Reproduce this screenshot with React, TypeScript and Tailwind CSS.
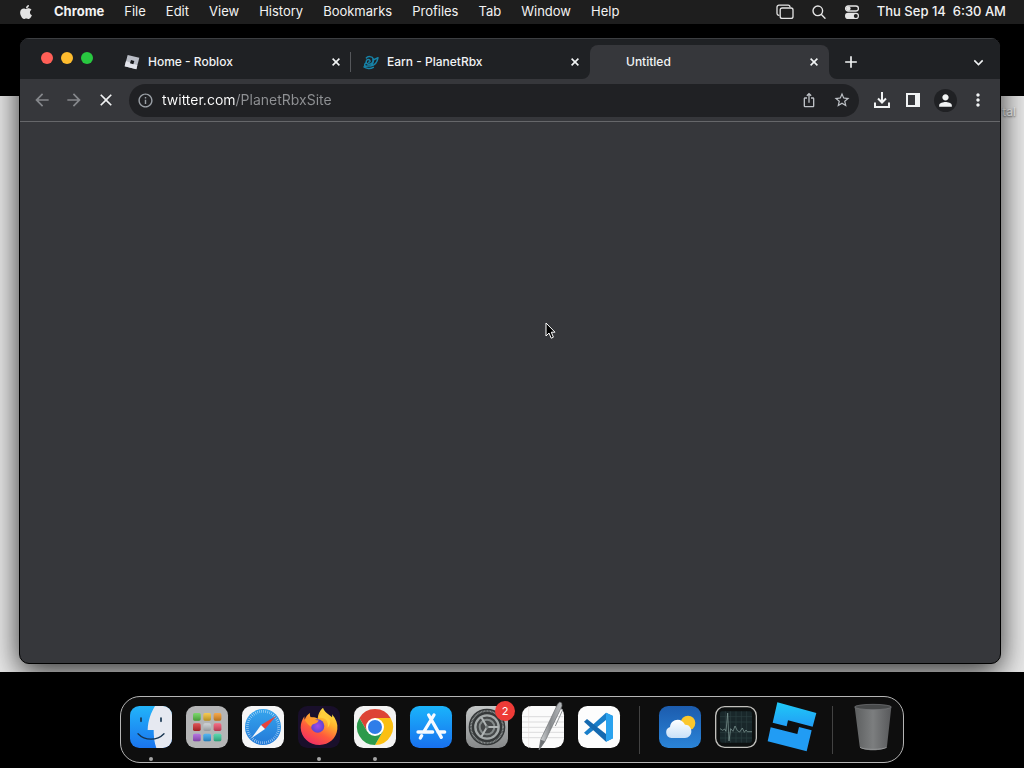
import React from 'react';
import { FaApple } from 'react-icons/fa';
import { MdArrowBack, MdArrowForward, MdClose, MdAdd, MdExpandMore, MdInfoOutline, MdIosShare, MdStarBorder, MdPerson, MdMoreVert } from 'react-icons/md';

const menus = ['File', 'Edit', 'View', 'History', 'Bookmarks', 'Profiles', 'Tab', 'Window', 'Help'];

const MenuBar = () => (
  <header className="relative z-10 flex h-6 items-center justify-between bg-[#1e1e1e] pl-[18px] pr-[18px] text-[13px] text-[#f2f2f2]">
    <nav className="flex items-center gap-5">
      <button aria-label="Apple menu"><FaApple size={16} className="text-[#e4e4e4]" /></button>
      <button className="font-bold">Chrome</button>
      {menus.map((m) => <button key={m}>{m}</button>)}
    </nav>
    <div className="flex items-center gap-[17px]">
      <button aria-label="Stage Manager">
        <svg width="18" height="16" viewBox="0 0 18 16" fill="none" stroke="#e4e4e4" strokeWidth="1.3">
          <path d="M3.400 11.300H3a2 2 0 0 1-2-2V3.200a2 2 0 0 1 2-2h9a2 2 0 0 1 2 2" />
          <rect x="4.200" y="4" width="12.800" height="10.400" rx="2" />
        </svg>
      </button>
      <button aria-label="Spotlight">
        <svg width="16" height="16" viewBox="0 0 16 16" fill="none" stroke="#e4e4e4" strokeWidth="1.4" strokeLinecap="round">
          <circle cx="6.800" cy="6.800" r="4.800" />
          <path d="M10.400 10.400l3.600 3.800" />
        </svg>
      </button>
      <button aria-label="Control Center">
        <svg width="16" height="16" viewBox="0 0 16 16">
          <rect x="1.600" y="2" width="12.800" height="5" rx="2.500" fill="none" stroke="#e4e4e4" strokeWidth="1.300" />
          <circle cx="4.300" cy="4.500" r="2.300" fill="#e4e4e4" />
          <rect x="1" y="8.800" width="14" height="6.200" rx="3.100" fill="#e4e4e4" />
          <circle cx="11.800" cy="11.900" r="2" fill="#1e1e1e" />
        </svg>
      </button>
      <time className="whitespace-pre font-medium">Thu Sep 14  6:30 AM</time>
    </div>
  </header>
);

const RobloxFavicon = () => (
  <svg width="16" height="16" viewBox="0 0 48 48">
    <path d="M11 3L46 11 37 46 2 37z" fill="#b9bdc6" />
    <path d="M2 37L6 21 40 34 37 46z" fill="#e2e4eb" />
    <path d="M21 18L31 21 28 31 18 28z" fill="#15171a" />
  </svg>
);

const PlanetFavicon = () => (
  <svg width="16" height="16" viewBox="0 0 48 48" fill="none" stroke="#1683a8" strokeWidth="4.500" strokeLinecap="round" strokeLinejoin="round">
    <path d="M10 12c4-6 18-6 21 3 2 8-6 16-13 16-6 0-10-5-8-10 2-5 9-6 11-1 1 3-1 5-4 5" />
    <path d="M31 18l14-7c-2 13-9 23-22 25-8 1-13-1-20 3 6 5 20 6 28 1M8 27c-3 3-4 6-2 9M30 17c2 7 0 12-5 16" />
  </svg>
);

const Tab = ({ title, icon, active, divider }: { title: string; icon?: React.ReactNode; active?: boolean; divider?: boolean }) => (
  <div className={`relative flex w-[239px] items-center pl-3 pr-[7px] ${active ? 'rounded-t-lg bg-[#36373b]' : ''}`}>
    <button role="tab" aria-selected={!!active} className="flex min-w-0 flex-1 items-center gap-2 text-left">
      <span className="h-4 w-4 shrink-0">{icon}</span>
      <span className="truncate">{title}</span>
    </button>
    <button aria-label={`Close ${title}`} className="flex h-4 w-4 items-center justify-center">
      <svg width="8" height="8" viewBox="0 0 8 8" stroke="currentColor" strokeWidth="1.600"><path d="M0.600 0.600l6.800 6.800M7.400 0.600L0.600 7.400" /></svg>
    </button>
    {divider && <span className="absolute right-0 top-[7px] h-5 w-px bg-[#55575b]" />}
    {active && (
      <>
        <svg className="absolute -left-2 bottom-0" width="8" height="8" viewBox="0 0 8 8"><path d="M8 0v8H0a8 8 0 0 0 8-8z" fill="#36373b" /></svg>
        <svg className="absolute -right-2 bottom-0" width="8" height="8" viewBox="0 0 8 8"><path d="M0 0v8h8a8 8 0 0 1-8-8z" fill="#36373b" /></svg>
      </>
    )}
  </div>
);

const Toolbar = () => (
  <div className="flex h-[43px] items-center border-b border-[#66676a] bg-[#36373b] px-3 text-[#f1f3f4]">
    <div className="flex w-[97px] gap-3">
      <button aria-label="Back" className="text-[#85878b]"><MdArrowBack size={20} /></button>
      <button aria-label="Forward" className="text-[#85878b]"><MdArrowForward size={20} /></button>
      <button aria-label="Stop loading"><MdClose size={20} /></button>
    </div>
    <form className="flex h-[33px] flex-1 items-center rounded-full bg-[#202124] px-2" onSubmit={(e) => e.preventDefault()}>
      <button type="button" aria-label="Site information" className="text-[#9aa0a6]"><MdInfoOutline size={17} /></button>
      <input
        aria-label="Address"
        defaultValue="twitter.com/PlanetRbxSite"
        className="ml-2 min-w-0 flex-1 bg-linear-to-r from-white from-[74px] to-[#8f9194] to-[74px] bg-clip-text text-sm text-transparent outline-none"
      />
      <div className="flex items-center gap-4 text-[#bdc1c6]">
        <button type="button" aria-label="Share"><MdIosShare size={16} /></button>
        <button type="button" aria-label="Bookmark this tab"><MdStarBorder size={18} /></button>
      </div>
    </form>
    <div className="ml-[13px] flex items-center gap-[11px]">
      <button aria-label="Downloads">
        <svg width="20" height="20" viewBox="0 0 20 20" fill="none" stroke="currentColor" strokeWidth="2">
          <path d="M10 2v10M6 8.500l4 4 4-4M3 12.500V17h14v-4.500" />
        </svg>
      </button>
      <button aria-label="Side panel">
        <svg width="20" height="20" viewBox="0 0 20 20" fill="currentColor">
          <path fillRule="evenodd" d="M3 3h14v14H3zM5 5v10h7V5z" />
        </svg>
      </button>
      <button aria-label="Profile" className="flex h-[23px] w-[23px] items-center justify-center rounded-full bg-[#202124]"><MdPerson size={19} /></button>
      <button aria-label="Chrome menu"><MdMoreVert size={20} /></button>
    </div>
  </div>
);

const BrowserWindow = () => (
  <section className="relative flex flex-1 flex-col overflow-hidden rounded-[10px] border border-black bg-[#36373b] shadow-[0_8px_30px_rgba(0,0,0,0.8)]">
    <div className="flex h-[41px] border-t border-[#3c3e41] bg-[#1f2124] pl-[21px] text-xs font-medium text-[#f1f3f4]">
      <div className="flex h-[38px] w-[71px] items-center gap-2">
        <button aria-label="Close window" className="h-3 w-3 rounded-full bg-[#ff5f57]" />
        <button aria-label="Minimize window" className="h-3 w-3 rounded-full bg-[#febc2e]" />
        <button aria-label="Zoom window" className="h-3 w-3 rounded-full bg-[#28c840]" />
      </div>
      <div role="tablist" className="flex pt-[6px]">
        <Tab title="Home - Roblox" icon={<RobloxFavicon />} divider />
        <Tab title="Earn - PlanetRbx" icon={<PlanetFavicon />} />
        <Tab title="Untitled" active />
      </div>
      <div className="flex flex-1 items-center justify-between px-3 pt-[6px]">
        <button aria-label="New tab"><MdAdd size={20} /></button>
        <button aria-label="Search tabs"><MdExpandMore size={19} /></button>
      </div>
    </div>
    <Toolbar />
    <div className="flex-1" />
  </section>
);

// Every dock icon is drawn on a 126 unit square.
const Icon = ({ children }: { children: React.ReactNode }) => (
  <svg className="h-[42px] w-[42px] overflow-visible" viewBox="0 0 126 126">{children}</svg>
);

const Finder = () => (
  <Icon>
    <defs>
      <linearGradient id="finder" x2="0" y2="1"><stop stopColor="#22b4fa" /><stop offset="1" stopColor="#1a74ee" /></linearGradient>
      <clipPath id="finderClip"><rect width="126" height="126" rx="28" /></clipPath>
    </defs>
    <g clipPath="url(#finderClip)">
      <rect width="126" height="126" fill="url(#finder)" />
      <path d="M75 0C62 22 54 44 53 72h18c0 20 2 38 8 54h47V0z" fill="#e6e9f1" />
    </g>
    <path d="M33 36v10M93 36v10" stroke="#16344f" strokeWidth="5" strokeLinecap="round" />
    <path d="M24 83c21 22 57 22 78 0" fill="none" stroke="#16344f" strokeWidth="4" strokeLinecap="round" />
  </Icon>
);

const apps = ['#5ccc48', '#f3bd2b', '#f29422', '#d3282b', '#c3c8cc', '#ef4866', '#a354d8', '#2ca3ee', '#35cf9c'];

const Launchpad = () => (
  <Icon>
    <defs>
      <linearGradient id="tileShade" x2="0" y2="1"><stop stopColor="#fff" stopOpacity="0.2" /><stop offset="1" stopOpacity="0.25" /></linearGradient>
    </defs>
    <rect width="126" height="126" rx="28" fill="#b4b5b6" />
    {apps.map((c, i) => (
      <g key={c} transform={`translate(${21 + (i % 3) * 31} ${21 + Math.floor(i / 3) * 31})`}>
        <rect width="23" height="23" rx="5" fill={c} />
        <rect width="23" height="23" rx="5" fill="url(#tileShade)" />
      </g>
    ))}
  </Icon>
);

const Safari = () => (
  <Icon>
    <defs>
      <linearGradient id="safari" x2="0" y2="1"><stop stopColor="#35a5ed" /><stop offset="1" stopColor="#2379d8" /></linearGradient>
    </defs>
    <rect width="126" height="126" rx="28" fill="#f5f5f6" />
    <circle cx="63" cy="63" r="54" fill="url(#safari)" />
    <circle cx="63" cy="63" r="47" fill="none" stroke="#d5eafb" strokeWidth="8" strokeDasharray="1.500 4.650" />
    <path d="M103 29L57 57l12 12z" fill="#e8433c" />
    <path d="M28 97l29-40 12 12z" fill="#f6f7f9" />
  </Icon>
);

const Firefox = () => (
  <Icon>
    <defs>
      <linearGradient id="fox" x1="0.800" y1="0" x2="0.250" y2="1">
        <stop stopColor="#fff04a" /><stop offset="0.350" stopColor="#ffb02d" /><stop offset="0.650" stopColor="#ff5a3c" /><stop offset="1" stopColor="#ef2a68" />
      </linearGradient>
      <radialGradient id="globe"><stop stopColor="#a04bea" /><stop offset="1" stopColor="#5e46cf" /></radialGradient>
    </defs>
    <rect width="126" height="126" rx="28" fill="#190f2b" />
    <path d="M75 5c5 15 16 17 27 29 1-3 1-6 0-9 12 14 18 29 16 45-3 27-25 47-53 47-31 0-56-23-57-52 0-13 4-23 11-34 0 4 0 7 1 10 3-8 9-16 16-20-1 5 0 9 2 13 8-1 15 0 21 4 1-13 6-25 16-33z" fill="url(#fox)" />
    <circle cx="59" cy="60" r="20" fill="url(#globe)" />
    <path d="M20 42c7-6 15-9 24-6 5 5 11 7 18 7-2 7-8 9-15 11-5 2-7 5-7 9-8-6-14-12-20-21z" fill="#ff9a2c" />
    <path d="M62 36c20-3 31 10 27 29 6-7 8-14 8-20-5-12-14-20-24-26-5 5-9 10-11 17z" fill="#ffcf3c" />
  </Icon>
);

const Chrome = () => (
  <Icon>
    <rect width="126" height="126" rx="28" fill="#f3f3f3" />
    <path d="M16.200 36A54 54 0 0 1 109.800 36H63L39.600 76.500z" fill="#dd4335" />
    <path d="M109.800 36A54 54 0 0 1 63 117L86.400 76.500 63 36z" fill="#fbbf12" />
    <path d="M63 117A54 54 0 0 1 16.200 36L39.600 76.500H86.400z" fill="#2c9a4b" />
    <circle cx="63" cy="63" r="27" fill="#fff" />
    <circle cx="63" cy="63" r="21" fill="#2f7de9" />
  </Icon>
);

const AppStore = () => (
  <Icon>
    <defs>
      <linearGradient id="store" x2="0" y2="1"><stop stopColor="#1ab4fb" /><stop offset="1" stopColor="#1870ee" /></linearGradient>
    </defs>
    <rect width="126" height="126" rx="28" fill="url(#store)" />
    <path d="M72 27L41 78M56 27l38 67M24 78h44M84 78h20M35 89l-4 7" stroke="#f6faff" strokeWidth="10" strokeLinecap="round" fill="none" />
  </Icon>
);

const Settings = () => (
  <Icon>
    <defs>
      <linearGradient id="settings" x2="0" y2="1"><stop stopColor="#c3c6c6" /><stop offset="1" stopColor="#868889" /></linearGradient>
    </defs>
    <rect width="126" height="126" rx="28" fill="url(#settings)" />
    <circle cx="63" cy="63" r="55" fill="#353839" />
    <circle cx="63" cy="63" r="48" fill="none" stroke="#8c9191" strokeWidth="5" strokeDasharray="3 1.500" />
    <circle cx="63" cy="63" r="35" fill="#454849" stroke="#a4a9a9" strokeWidth="7" />
    <circle cx="63" cy="63" r="22" fill="none" stroke="#858b8b" strokeWidth="6" />
    <path d="M63 63h34M63 63L46 34M63 63L46 92" stroke="#b0b5b5" strokeWidth="6" />
    <circle cx="63" cy="63" r="5" fill="#6f7575" />
  </Icon>
);

const TextEdit = () => (
  <Icon>
    <defs>
      <linearGradient id="pen"><stop stopColor="#dadcde" /><stop offset="0.500" stopColor="#888b8e" /><stop offset="1" stopColor="#b9bcbf" /></linearGradient>
    </defs>
    <rect width="126" height="126" rx="28" fill="#fbfbfb" />
    <path d="M2 32h122M0 48h126M0 64h126M0 79h126M0 95h126" stroke="#cbcccd" strokeWidth="2" />
    <path d="M20 0v126" stroke="#e6dedc" strokeWidth="2" />
    <path d="M107-6l6-6 6 3 1 9-51 106-18 26 5-31z" fill="url(#pen)" stroke="#696c6f" strokeWidth="2" />
    <path d="M56 101l13 5-18 26z" fill="#6d7073" />
    <path d="M119 8l3 4-22 48" fill="none" stroke="#8f9396" strokeWidth="3" />
  </Icon>
);

const VsCode = () => (
  <Icon>
    <rect width="126" height="126" rx="28" fill="#fdfdfd" />
    <path d="M84 20l21 10v67l-21 10V42L27 88l-9-8z" fill="#1a7fca" />
    <path d="M18 47l9-8 57 45v23L18 47z" fill="#1469b0" />
    <path d="M84 20l21 10v67l-21 10z" fill="#2aa2ee" />
  </Icon>
);

const Weather = () => (
  <Icon>
    <defs>
      <linearGradient id="sky" x2="0" y2="1"><stop stopColor="#1c5cae" /><stop offset="1" stopColor="#2a84d8" /></linearGradient>
      <linearGradient id="cloud" x2="0" y2="1"><stop stopColor="#fff" /><stop offset="1" stopColor="#c8e0f8" /></linearGradient>
    </defs>
    <rect width="126" height="126" rx="28" fill="url(#sky)" />
    <circle cx="87" cy="51" r="22" fill="#fbc72c" />
    <path d="M37 96a17 17 0 0 1-4-33c1-13 11-22 23-22 10 0 18 6 22 15 11-1 19 8 19 20s-8 20-19 20z" fill="url(#cloud)" />
  </Icon>
);

const ActivityMonitor = () => (
  <Icon>
    <rect x="2" y="2" width="122" height="122" rx="27" fill="#0d1010" stroke="#c2c1bd" strokeWidth="4" />
    <rect x="15" y="16" width="96" height="94" rx="6" fill="#19272a" />
    <path d="M15 32h96M15 48h96M15 80h96M15 96h96M31 16v94M47 16v94M63 16v94M79 16v94M95 16v94" stroke="#2c4041" strokeWidth="2" />
    <path d="M15 68l8 5 6-4 4 7 5-55 4 84 5-37 7 8 6-16 7 14 7 4 8-12 6 13 5-7 4 5h14" fill="none" stroke="#8aa39f" strokeWidth="2" />
  </Icon>
);

const Studio = () => (
  <Icon>
    <defs>
      <linearGradient id="studio" x2="0" y2="1"><stop stopColor="#1fcaf8" /><stop offset="1" stopColor="#229df5" /></linearGradient>
    </defs>
    <path d="M19-11l117 32-11 41-74-19-4 18L5 50z" fill="url(#studio)" />
    <path d="M-1 64l80 20 5-21 38 10-15 63-117-30z" fill="#219cf4" />
  </Icon>
);

const Trash = () => (
  <Icon>
    <defs>
      <linearGradient id="bin"><stop stopColor="#5d5f60" /><stop offset="0.500" stopColor="#7c7e7f" /><stop offset="1" stopColor="#58595b" /></linearGradient>
    </defs>
    <path d="M8 3l15 118c1 16 79 16 82 0L118 3z" fill="url(#bin)" />
    <ellipse cx="63" cy="3" rx="55" ry="8" fill="#47494a" stroke="#77797b" strokeWidth="2" />
    <path d="M24 124c10 8 68 8 80 0" fill="none" stroke="#939596" strokeWidth="3" />
  </Icon>
);

const DockItem = ({ name, icon, running, badge }: { name: string; icon: React.ReactNode; running?: boolean; badge?: number }) => (
  <button aria-label={name} className="relative">
    {icon}
    {badge && <span className="absolute -right-[7px] -top-[5px] flex h-5 w-5 items-center justify-center rounded-full bg-[#ee3b37] text-[11px] text-white">{badge}</span>}
    {running && <span className="absolute left-1/2 top-[51px] h-1 w-1 -translate-x-1/2 rounded-full bg-[#a5a5a5]" />}
  </button>
);

const Dock = () => (
  <nav aria-label="Dock" className="flex h-[67px] items-start gap-[14px] rounded-[20px] border border-[#b5b5b5] bg-[#0e0e0e] px-[9px] pt-[9px]">
    <DockItem name="Finder" icon={<Finder />} running />
    <DockItem name="Launchpad" icon={<Launchpad />} />
    <DockItem name="Safari" icon={<Safari />} />
    <DockItem name="Firefox" icon={<Firefox />} running />
    <DockItem name="Google Chrome" icon={<Chrome />} running />
    <DockItem name="App Store" icon={<AppStore />} />
    <DockItem name="System Settings" icon={<Settings />} badge={2} />
    <DockItem name="TextEdit" icon={<TextEdit />} />
    <DockItem name="Visual Studio Code" icon={<VsCode />} />
    <span className="mx-[5px] h-12 w-px bg-[#424242]" />
    <DockItem name="Weather" icon={<Weather />} />
    <DockItem name="Activity Monitor" icon={<ActivityMonitor />} />
    <DockItem name="Roblox Studio" icon={<Studio />} />
    <span className="mx-[5px] h-12 w-px bg-[#424242]" />
    <DockItem name="Trash" icon={<Trash />} />
  </nav>
);

const App = () => {
  return (
    <div className="relative flex min-h-screen flex-col overflow-hidden bg-black font-['Inter',sans-serif]">
      <MenuBar />
      <main className="relative flex flex-1 flex-col pl-[19px] pr-[23px] pt-[13px]">
        {/* letterboxed wallpaper, the window shadow is cut off at its bottom edge */}
        <div className="absolute inset-x-0 -bottom-2 top-[72px] bg-[#e9e9e9]">
          <span className="absolute right-2 top-2 text-xs text-white [text-shadow:0_1px_2px_#555]">tal</span>
        </div>
        <BrowserWindow />
      </main>
      <footer className="relative mt-2 flex justify-center bg-black pb-[5px] pt-6">
        <Dock />
      </footer>
      <svg className="pointer-events-none absolute left-[545px] top-[322px]" width="11" height="18" viewBox="0 0 11 18">
        <path d="M1 1v13l3-3 2.200 5.200 2.200-1L6.300 10.200H10z" fill="#000" stroke="#fff" />
      </svg>
    </div>
  );
};

export default App;
